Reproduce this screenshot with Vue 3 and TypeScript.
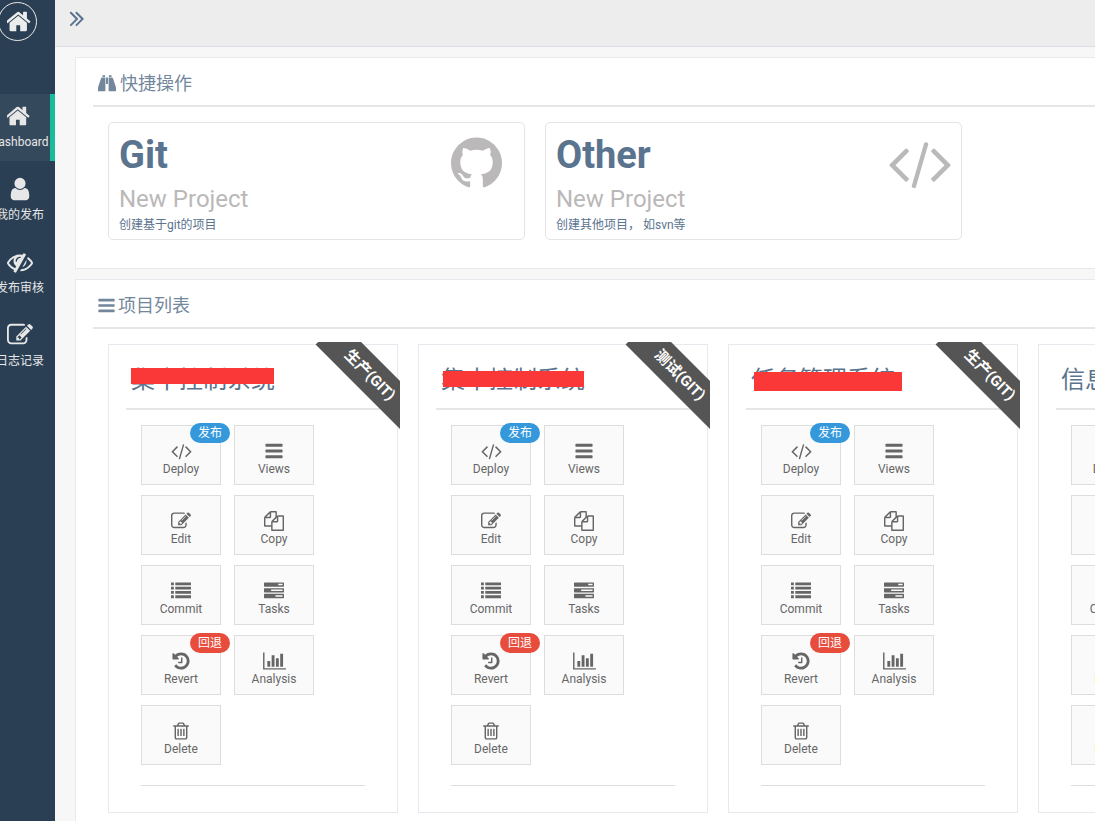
<script setup lang="ts">
import { h } from 'vue'

interface Glyph { w?: number; x?: number; d: string }
interface NavItem { icon: string; label: string; active?: boolean }
interface Action { icon: string; label: string; badge?: string; tone?: string }
interface Project { title: string; ribbon?: string; mask?: string; marked?: boolean }

const row = (y: number) => `M0 ${y}h256v256h-256zM384 ${y}h1408v256h-1408z`

const glyphs: Record<string, Glyph> = {
  home: { x: 150, d: 'M1472 992v480q0 26-19 45t-45 19h-384v-384h-256v384h-384q-26 0-45-19t-19-45v-480q0-1 .5-3t.5-3l575-474 575 474q1 2 1 6zm223-69l-62 74q-8 9-21 11h-3q-13 0-21-7l-692-577-692 577q-12 8-24 7-13-2-21-11l-62-74q-8-10-7-23.5t11-21.5l719-599q32-26 76-26t76 26l244 204v-195q0-14 9-23t23-9h192q14 0 23 9t9 23v408l219 182q10 8 11 21.5t-7 23.5z' },
  user: { d: 'M1536 1399q0 109-62.5 187t-150.5 78h-854q-88 0-150.5-78t-62.5-187q0-85 8.5-160.5t31.5-152 58.5-131 94-89 134.5-34.5q131 128 313 128t313-128q76 0 134.5 34.5t94 89 58.5 131 31.5 152 8.5 160.5zm-256-887q0 159-112.5 271.5t-271.5 112.5-271.5-112.5-112.5-271.5 112.5-271.5 271.5-112.5 271.5 112.5 112.5 271.5z' },
  eyeSlash: { d: 'M555 1335l78-141q-87-63-136-159t-49-203q0-121 61-225-229 117-381 353 167 258 427 375zm389-759q0-20-14-34t-34-14q-125 0-214.5 89.5t-89.5 214.5q0 20 14 34t34 14 34-14 14-34q0-86 61-147t147-61q20 0 34-14t14-34zm363-191q0 7-1 9-106 189-316 567t-315 566l-49 89q-10 16-28 16-12 0-134-70-16-10-16-28 0-12 44-87-143-65-263.5-173t-208.5-245q-20-31-20-69t20-69q153-235 380-371t496-136q89 0 180 17l54-97q10-16 28-16 5 0 18 6t31 15.5 33 18.5 31.5 18.5 19.5 11.5q16 10 16 27zm37 447q0 139-79 253.5t-209 164.5l280-502q8 45 8 84zm448 128q0 35-20 69-39 64-109 145-150 172-347.5 267t-419.5 95l74-132q212-18 392.5-137t301.5-307q-115-179-282-294l63-112q95 64 182.5 153t144.5 184q20 34 20 69z' },
  edit: { d: 'M888 1184l116-116-152-152-116 116v56h96v96h56zm440-720q-16-16-33 1l-350 350q-17 17-1 33t33-1l350-350q17-17 1-33zm80 594v190q0 119-84.5 203.5t-203.5 84.5h-832q-119 0-203.5-84.5t-84.5-203.5v-832q0-119 84.5-203.5t203.5-84.5h832q63 0 117 25 15 7 18 23 3 17-9 29l-49 49q-14 14-32 8-23-6-45-6h-832q-66 0-113 47t-47 113v832q0 66 47 113t113 47h832q66 0 113-47t47-113v-126q0-13 9-22l64-64q15-15 35-7t20 29zm-96-738l288 288-672 672h-288v-288zm444 132l-92 92-288-288 92-92q28-28 68-28t68 28l152 152q28 28 28 68t-28 68z' },
  angles: { d: 'M979 960q0 13-10 23l-466 466q-10 10-23 10t-23-10l-50-50q-10-10-10-23t10-23l393-393-393-393q-10-10-10-23t10-23l50-50q10-10 23-10t23 10l466 466q10 10 10 23zm384 0q0 13-10 23l-466 466q-10 10-23 10t-23-10l-50-50q-10-10-10-23t10-23l393-393-393-393q-10-10-10-23t10-23l50-50q10-10 23-10t23 10l466 466q10 10 10 23z' },
  binoculars: { d: 'M448 128h256v160h-256zM1088 128h256v160h-256zM400 352h336v1312q0 64-64 64h-608q-64 0-64-64v-300q0-40 16-80l290-850q20-82 94-82zM1056 352h336q74 0 94 82l290 850q16 40 16 80v300q0 64-64 64h-608q-64 0-64-64zM800 352h192v640h-192z' },
  bars: { d: 'M1664 1344v128q0 26-19 45t-45 19h-1408q-26 0-45-19t-19-45v-128q0-26 19-45t45-19h1408q26 0 45 19t19 45zm0-512v128q0 26-19 45t-45 19h-1408q-26 0-45-19t-19-45v-128q0-26 19-45t45-19h1408q26 0 45 19t19 45zm0-512v128q0 26-19 45t-45 19h-1408q-26 0-45-19t-19-45v-128q0-26 19-45t45-19h1408q26 0 45 19t19 45z' },
  github: { x: 128, w: 1536, d: 'M896 128q209 0 385.5 103t279.5 279.5 103 385.5q0 251-146.5 451.5t-378.5 277.5q-27 5-40-7t-13-30q0-3 .5-76.5t.5-134.5q0-97-52-142 57-6 102.5-18t94-39 81-66.5 53-105 20.5-150.5q0-119-79-206 37-91-8-204-28-9-81 11t-92 44l-38 24q-93-26-192-26t-192 26q-16-11-42.5-27t-83.5-38.5-85-13.5q-45 113-8 204-79 87-79 206 0 85 20.5 150t52.5 105 80.5 67 94 39 102.5 18q-39 36-49 103-21 10-45 15t-57 5-65.5-21.5-55.5-62.5q-19-32-48.5-52t-49.5-24l-20-3q-21 0-29 4.5t-5 11.5 9 14 13 12l7 5q22 10 43.5 38t31.5 51l10 23q13 38 44 61.5t67 30 69.5 7 55.5-3.5l23-4q0 38 .5 88.5t.5 54.5q0 18-13 30t-40 7q-232-77-378.5-277.5t-146.5-451.5q0-209 103-385.5t279.5-279.5 385.5-103z' },
  code: { w: 1920, d: 'M617 1399l-50 50q-10 10-23 10t-23-10l-466-466q-10-10-10-23t10-23l466-466q10-10 23-10t23 10l50 50q10 10 10 23t-10 23l-393 393 393 393q10 10 10 23t-10 23zm591-1067l-373 1291q-4 13-15.5 19.5t-23.5 2.5l-62-17q-13-4-19.5-15.5t-2.5-24.5l373-1291q4-13 15.5-19.5t23.5-2.5l62 17q13 4 19.5 15.5t2.5 24.5zm657 651l-466 466q-10 10-23 10t-23-10l-50-50q-10-10-10-23t10-23l393-393-393-393q-10-10-10-23t10-23l50-50q10-10 23-10t23 10l466 466q10 10 10 23t-10 23z' },
  copy: { d: 'M1696 384q40 0 68 28t28 68v1216q0 40-28 68t-68 28h-960q-40 0-68-28t-28-68v-288h-544q-40 0-68-28t-28-68v-672q0-40 20-88t48-76l408-408q28-28 76-48t88-20h416q40 0 68 28t28 68v328q68-40 128-40h416zm-544 213l-299 299h299v-299zm-640-384l-299 299h299v-299zm196 647l316-316v-416h-384v416q0 40-28 68t-68 28h-416v640h512v-256q0-40 20-88t48-76zm956 804v-1152h-384v416q0 40-28 68t-68 28h-416v640h896z' },
  list: { d: [128, 512, 896, 1280].map(row).join('') },
  tasks: { d: 'M1024 1408h640v-128h-640v128zm-384-512h1024v-128h-1024v128zm640-512h384v-128h-384v128zm512 832v256q0 26-19 45t-45 19h-1664q-26 0-45-19t-19-45v-256q0-26 19-45t45-19h1664q26 0 45 19t19 45zm0-512v256q0 26-19 45t-45 19h-1664q-26 0-45-19t-19-45v-256q0-26 19-45t45-19h1664q26 0 45 19t19 45zm0-512v256q0 26-19 45t-45 19h-1664q-26 0-45-19t-19-45v-256q0-26 19-45t45-19h1664q26 0 45 19t19 45z' },
  history: { d: 'M1664 896q0 156-61 298t-164 245-245 164-298 61q-172 0-327-72.5t-264-204.5q-7-10-6.5-22.5t8.5-20.5l137-138q10-9 25-9 16 2 23 12 73 95 179 147t225 52q104 0 198.5-40.5t163.5-109.5 109.5-163.5 40.5-198.5-40.5-198.5-109.5-163.5-163.5-109.5-198.5-40.5q-98 0-188 35.5t-160 101.5l137 138q31 30 14 69-17 40-59 40h-448q-26 0-45-19t-19-45v-448q0-42 40-59 39-17 69 14l130 129q107-101 244.5-156.5t284.5-55.5q156 0 298 61t245 164 164 245 61 298zm-640-288v448q0 14-9 23t-23 9h-320q-14 0-23-9t-9-23v-64q0-14 9-23t23-9h224v-352q0-14 9-23t23-9h64q14 0 23 9t9 23z' },
  chart: { w: 2048, d: 'M640 896v512h-256v-512h256zm384-512v1024h-256v-1024h256zm1024 1152v128h-2048v-1536h128v1408h1920zm-640-896v768h-256v-768h256zm384-384v1152h-256v-1152h256z' },
  trash: { d: 'M704 736v576q0 14-9 23t-23 9h-64q-14 0-23-9t-9-23v-576q0-14 9-23t23-9h64q14 0 23 9t9 23zm256 0v576q0 14-9 23t-23 9h-64q-14 0-23-9t-9-23v-576q0-14 9-23t23-9h64q14 0 23 9t9 23zm256 0v576q0 14-9 23t-23 9h-64q-14 0-23-9t-9-23v-576q0-14 9-23t23-9h64q14 0 23 9t9 23zm128 724v-948h-896v948q0 22 7 40.5t14.5 27 10.5 8.5h832q3 0 10.5-8.5t14.5-27 7-40.5zm-672-1076h448l-48-117q-7-9-17-11h-317q-10 2-17 11zm928 32v64q0 14-9 23t-23 9h-96v948q0 83-47 143.5t-113 60.5h-832q-66 0-113-58.5t-47-141.5v-952h-96q-14 0-23-9t-9-23v-64q0-14 9-23t23-9h309l70-167q15-37 54-63t79-26h320q40 0 79 26t54 63l70 167h309q14 0 23 9t9 23z' },
}

const Icon = (props: { name: string; size: number }) => {
  const g = glyphs[props.name]
  const w = g.w ?? 1792
  return h('svg', {
    viewBox: `${g.x ?? 0} 0 ${w} 1792`,
    height: props.size,
    width: Math.round((props.size * w) / 1792),
    fill: 'currentColor',
    'aria-hidden': 'true',
  }, [h('path', { d: g.d })])
}
Icon.props = ['name', 'size']

const nav: NavItem[] = [
  { icon: 'home', label: 'Dashboard', active: true },
  { icon: 'user', label: '我的发布' },
  { icon: 'eyeSlash', label: '发布审核' },
  { icon: 'edit', label: '日志记录' },
]

const quick = [
  { icon: 'github', name: 'Git', note: '创建基于git的项目' },
  { icon: 'code', name: 'Other', note: '创建其他项目， 如svn等' },
]

const projects: Project[] = [
  { title: '集中控制系统', ribbon: '生产(GIT)', mask: 'first' },
  { title: '集中控制系统', ribbon: '测试(GIT)', mask: 'second' },
  { title: '任务管理系统', ribbon: '生产(GIT)', mask: 'third' },
  { title: '信息', marked: true },
]

const actions: Action[] = [
  { icon: 'code', label: 'Deploy', badge: '发布', tone: 'blue' },
  { icon: 'bars', label: 'Views' },
  { icon: 'edit', label: 'Edit' },
  { icon: 'copy', label: 'Copy' },
  { icon: 'list', label: 'Commit' },
  { icon: 'tasks', label: 'Tasks' },
  { icon: 'history', label: 'Revert', badge: '回退', tone: 'red' },
  { icon: 'chart', label: 'Analysis' },
  { icon: 'trash', label: 'Delete' },
]
</script>

<template>
  <div class="app">
    <aside class="sidebar">
      <div class="rail">
        <a class="logo" href="#" aria-label="Home"><Icon class="logo-icon" name="home" :size="27" /></a>
        <nav class="nav">
          <a v-for="n in nav" :key="n.label" href="#" class="nav-item" :class="{ active: n.active }">
            <Icon :name="n.icon" :size="26" />
            <span>{{ n.label }}</span>
          </a>
        </nav>
      </div>
    </aside>
    <div class="page">
      <header class="topbar">
        <button class="toggle" type="button" aria-label="Toggle menu"><Icon name="angles" :size="26" /></button>
      </header>
      <main class="content">
        <section class="panel quick-panel">
          <h2 class="panel-title"><Icon class="title-icon" name="binoculars" :size="18" />快捷操作</h2>
          <div class="cards">
            <a v-for="q in quick" :key="q.name" href="#" class="quick">
              <span class="quick-text">
                <strong>{{ q.name }}</strong>
                <span class="sub">New Project</span>
                <span class="note">{{ q.note }}</span>
              </span>
              <span class="quick-icon"><Icon :name="q.icon" :size="60" /></span>
            </a>
          </div>
        </section>
        <section class="panel">
          <h2 class="panel-title"><Icon class="title-icon list-icon" name="bars" :size="19" />项目列表</h2>
          <div class="cards">
            <article v-for="(p, i) in projects" :key="i" class="project">
              <h3 class="project-title">
                {{ p.title }}
                <span v-if="p.mask" class="mask" :class="p.mask"></span>
              </h3>
              <div v-if="p.ribbon" class="ribbon-box"><div class="ribbon">{{ p.ribbon }}</div></div>
              <div class="actions">
                <button
                  v-for="a in actions"
                  :key="a.label"
                  type="button"
                  class="action"
                  :class="{ marked: p.marked && (a.label === 'Revert' || a.label === 'Delete') }"
                >
                  <span v-if="a.badge" class="badge" :class="a.tone">{{ a.badge }}</span>
                  <Icon :name="a.icon" :size="20" />
                  <span class="action-label">{{ a.label }}</span>
                </button>
              </div>
              <hr class="rule" />
            </article>
          </div>
        </section>
      </main>
    </div>
  </div>
</template>

<style>
body {
  margin: 0;
  background: #f7f7f7;
}
</style>

<style scoped>
* {
  box-sizing: border-box;
}
.app {
  display: flex;
  height: 100vh;
  overflow: hidden;
  font-family: Roboto, "Noto Sans CJK SC", sans-serif;
  font-size: 12px;
  color: #73879c;
}
a {
  color: inherit;
  text-decoration: none;
}
.sidebar {
  flex: none;
  width: 55px;
  overflow: hidden;
  background: #2a3f54;
}
.rail {
  width: 70px;
  margin-left: -15px;
  color: #e7e7e7;
}
.logo {
  display: flex;
  align-items: center;
  justify-content: center;
  width: 39px;
  height: 39px;
  margin: 2px 0 53px 13px;
  border: 1px solid #eaeaea;
  border-radius: 50%;
  color: #ececec;
}
.logo-icon {
  margin-left: 5px;
}
.nav-item {
  display: flex;
  flex-direction: column;
  align-items: center;
  height: 67px;
  margin-bottom: 6px;
  padding-top: 9px;
  white-space: nowrap;
  line-height: 16px;
  gap: 5px;
}
.nav-item.active {
  background: #35495d;
  border-right: 5px solid #1abb9c;
  padding-left: 4px;
}
.page {
  flex: 1;
  min-width: 0;
  background: #f7f7f7;
}
.topbar {
  height: 47px;
  padding: 5px 9px;
  background: #ededed;
  border-bottom: 1px solid #d9dee4;
}
.toggle {
  display: flex;
  padding: 0;
  border: 0;
  background: none;
  color: #5a738e;
}
.content {
  display: flex;
  flex-direction: column;
  gap: 10px;
  padding: 10px 0 0 20px;
  overflow: hidden;
}
.panel {
  padding: 10px 0 10px 17px;
  background: #fff;
  border: 1px solid #e6e9ed;
  border-right: 0;
}
.quick-panel {
  padding-bottom: 28px;
}
.panel-title {
  display: flex;
  align-items: center;
  height: 39px;
  margin: 0 0 15px;
  padding: 1px 5px 6px;
  border-bottom: 2px solid #e6e6e8;
  font-size: 18px;
  font-weight: 400;
  line-height: 30px;
}
.title-icon {
  margin: 0 4px 2px 0;
}
.list-icon {
  margin-right: 2px;
  margin-left: -1px;
}
.cards {
  display: flex;
  gap: 20px;
  padding-left: 15px;
}
.quick {
  display: flex;
  flex: none;
  justify-content: space-between;
  width: 417px;
  height: 118px;
  padding: 10px;
  border: 1px solid #e4e4e4;
  border-radius: 5px;
  color: #bab8b8;
}
.quick-text {
  display: flex;
  flex-direction: column;
}
.quick-text strong {
  font-size: 38px;
  line-height: 44px;
  color: #5a738e;
}
.quick-icon {
  width: 63px;
}
.sub {
  margin-top: 6px;
  font-size: 24px;
  line-height: 32px;
}
.note {
  line-height: 20px;
  color: #5a738e;
}
.project {
  position: relative;
  flex: none;
  width: 290px;
  padding: 10px 17px 26px;
  border: 1px solid #e6e9ed;
}
.project-title {
  position: relative;
  height: 55px;
  margin: 0 0 15px;
  padding: 7px 5px 5px;
  border-bottom: 2px solid #e6e6e8;
  font-size: 24px;
  font-weight: 400;
  line-height: 36px;
  white-space: nowrap;
  color: #5a738e;
}
.mask {
  position: absolute;
  background: #fb3838;
}
.first {
  top: 13px;
  left: 5px;
  width: 143px;
  height: 16px;
}
.second {
  top: 16px;
  left: 7px;
  width: 141px;
  height: 16px;
}
.third {
  top: 17px;
  left: 8px;
  width: 148px;
  height: 19px;
}
.ribbon-box {
  position: absolute;
  top: -3px;
  right: -3px;
  width: 85px;
  height: 88px;
  overflow: hidden;
}
.ribbon {
  position: absolute;
  top: 16px;
  left: -5px;
  width: 120px;
  background: #555;
  color: #fff;
  font-size: 15px;
  font-weight: 700;
  line-height: 34px;
  text-align: center;
  transform: rotate(45deg);
}
.actions {
  display: grid;
  grid-template-columns: 80px 80px;
  gap: 10px 13px;
  margin: 0 15px 20px;
}
.action {
  position: relative;
  display: flex;
  flex-direction: column;
  align-items: center;
  height: 60px;
  padding: 15px 0 0;
  border: 1px solid #ddd;
  background: #fafafa;
  color: #666;
  font-family: inherit;
  font-size: 12px;
  line-height: 16px;
}
.marked {
  color: #ffff73;
}
.badge {
  position: absolute;
  top: -3px;
  right: -10px;
  width: 40px;
  border-radius: 10px;
  line-height: 20px;
  color: #fff;
}
.blue {
  background: #3498db;
}
.red {
  background: #e74c3c;
}
.rule {
  margin: 0 15px;
  border: 0;
  border-top: 1px solid #dcdfe2;
}
</style>
